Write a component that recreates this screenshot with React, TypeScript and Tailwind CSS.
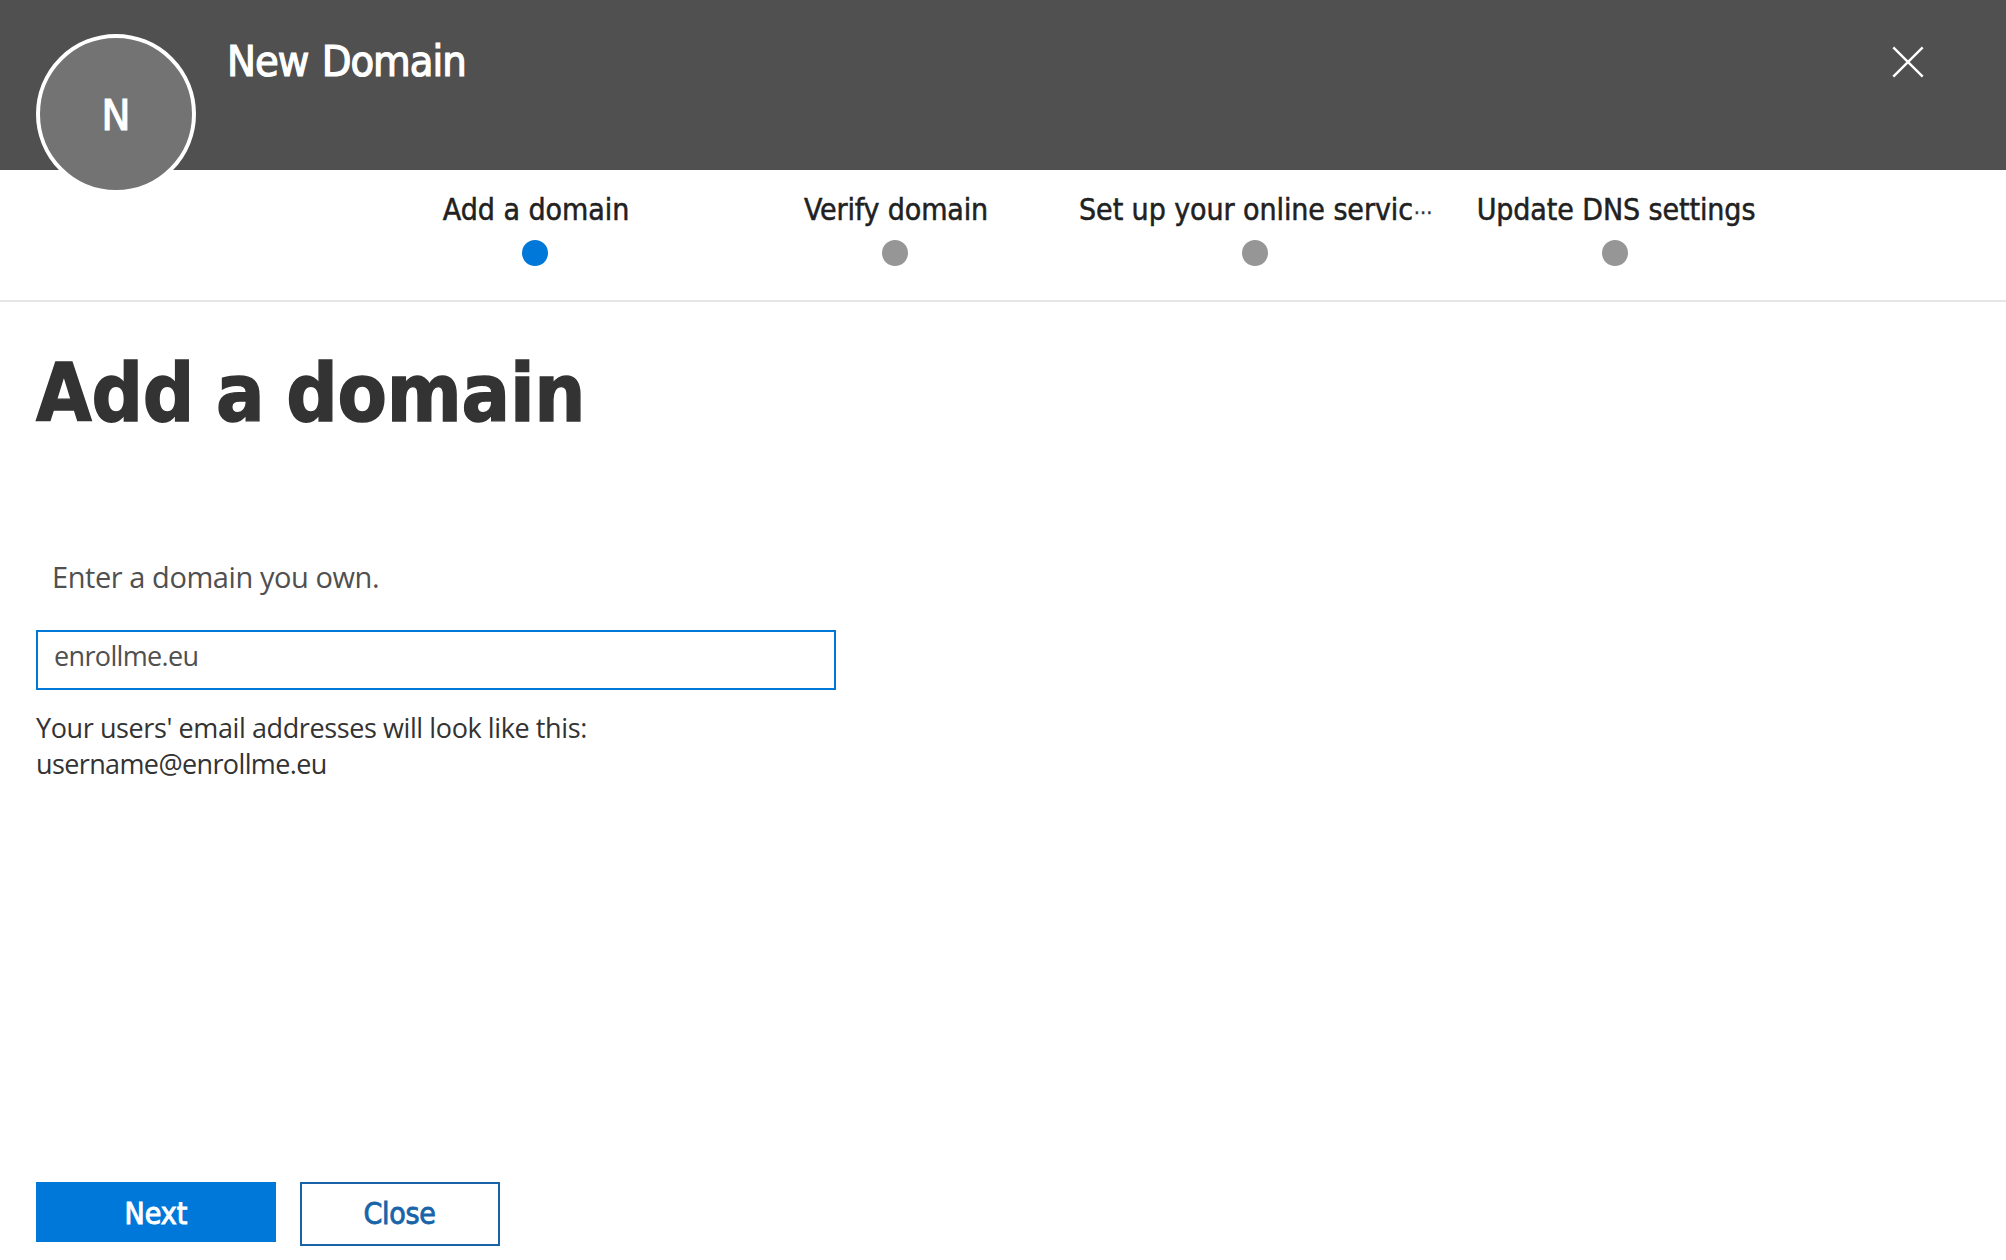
import React from "react";

type Step = { label: string; clipped?: boolean; active?: boolean; tracking: string };

const steps: Step[] = [
  { label: "Add a domain", active: true, tracking: "tracking-[-0.05px]" },
  { label: "Verify domain", tracking: "tracking-[-0.15px]" },
  { label: "Set up your online servic", clipped: true, tracking: "tracking-[-0.08px]" },
  { label: "Update DNS settings", tracking: "tracking-[-0.1px]" },
];

function Header() {
  return (
    <header className="flex h-[170px] items-start bg-[#505050] pl-9 text-[43px] leading-[44px] text-white [-webkit-text-stroke:1.2px_#fff]">
      <div className="relative z-10 mt-[34px] flex size-40 shrink-0 items-center justify-center rounded-full border-4 border-white bg-[#737373] pt-px">
        N
      </div>
      <h1 className="mt-[39px] ml-[31px] flex-1 tracking-[-1px] [word-spacing:2px]">New Domain</h1>
      <button aria-label="Close" className="mt-[46px] mr-[82px]">
        <svg width="32" height="32" viewBox="0 0 32 32" fill="none" stroke="white" strokeWidth="2.4">
          <path d="M1.3 1.3L30.7 30.7M30.7 1.3L1.3 30.7" />
        </svg>
      </button>
    </header>
  );
}

function Steps() {
  return (
    <nav className="flex h-[132px] border-b-2 border-[#e6e6e6] pt-5 pl-[355px]">
      {steps.map((s) => (
        <div key={s.label} className="flex w-[360px] shrink-0 flex-col items-center">
          <div className="flex h-10 items-baseline pl-[2px] text-[30px] leading-10 whitespace-nowrap text-[#212121] [-webkit-text-stroke:0.5px_#212121]">
            <span className={s.tracking}>{s.label}</span>
            {s.clipped && (
              <span className="ml-px text-[20px] tracking-[0.6px] [-webkit-text-stroke:0.5px_#505050]">···</span>
            )}
          </div>
          <div className={`mt-[10px] -ml-px size-[26px] rounded-full ${s.active ? "bg-[#0078d9]" : "bg-[#969696]"}`} />
        </div>
      ))}
    </nav>
  );
}

export default function App() {
  return (
    <div className="flex h-[1260px] w-[2006px] flex-col overflow-hidden bg-white font-['DejaVu_Sans_Condensed','DejaVu_Sans',sans-serif]">
      <Header />
      <Steps />
      <main className="flex flex-1 flex-col px-9 pt-11">
        <h2 className="text-[80px] leading-[96px] font-bold tracking-[-0.2px] text-[#333333] [word-spacing:-3px] [-webkit-text-stroke:1.4px_#333333]">
          Add a domain
        </h2>
        <div className="mt-[115px] font-['Open_Sans',sans-serif]">
          <label htmlFor="domain" className="block pl-4 text-[29px] leading-10 tracking-[-0.43px] text-[#505050]">
            Enter a domain you own.
          </label>
          <input
            id="domain"
            defaultValue="enrollme.eu"
            className="mt-[33px] block h-[60px] w-[800px] border-2 border-[#0078d7] px-4 pb-[9px] text-[27px] tracking-[-0.65px] text-[#505050] outline-none"
          />
          <div className="mt-5 text-[27px] leading-9 text-[#333333]">
            <p className="tracking-[-0.4px]">Your users' email addresses will look like this:</p>
            <p className="tracking-[-0.62px]">username@enrollme.eu</p>
          </div>
        </div>
      </main>
      <footer className="flex h-[78px] items-start gap-6 px-9 text-[30px]">
        <button className="flex h-[60px] w-60 items-center justify-center bg-[#0078d9] pt-[3px] text-white [-webkit-text-stroke:1px_#fff]">
          Next
        </button>
        <button className="flex h-16 w-[200px] items-center justify-center border-2 border-[#1964a8] pr-px pb-[2px] tracking-[-0.3px] text-[#1964a8] [-webkit-text-stroke:0.8px_#1964a8]">
          Close
        </button>
      </footer>
    </div>
  );
}
